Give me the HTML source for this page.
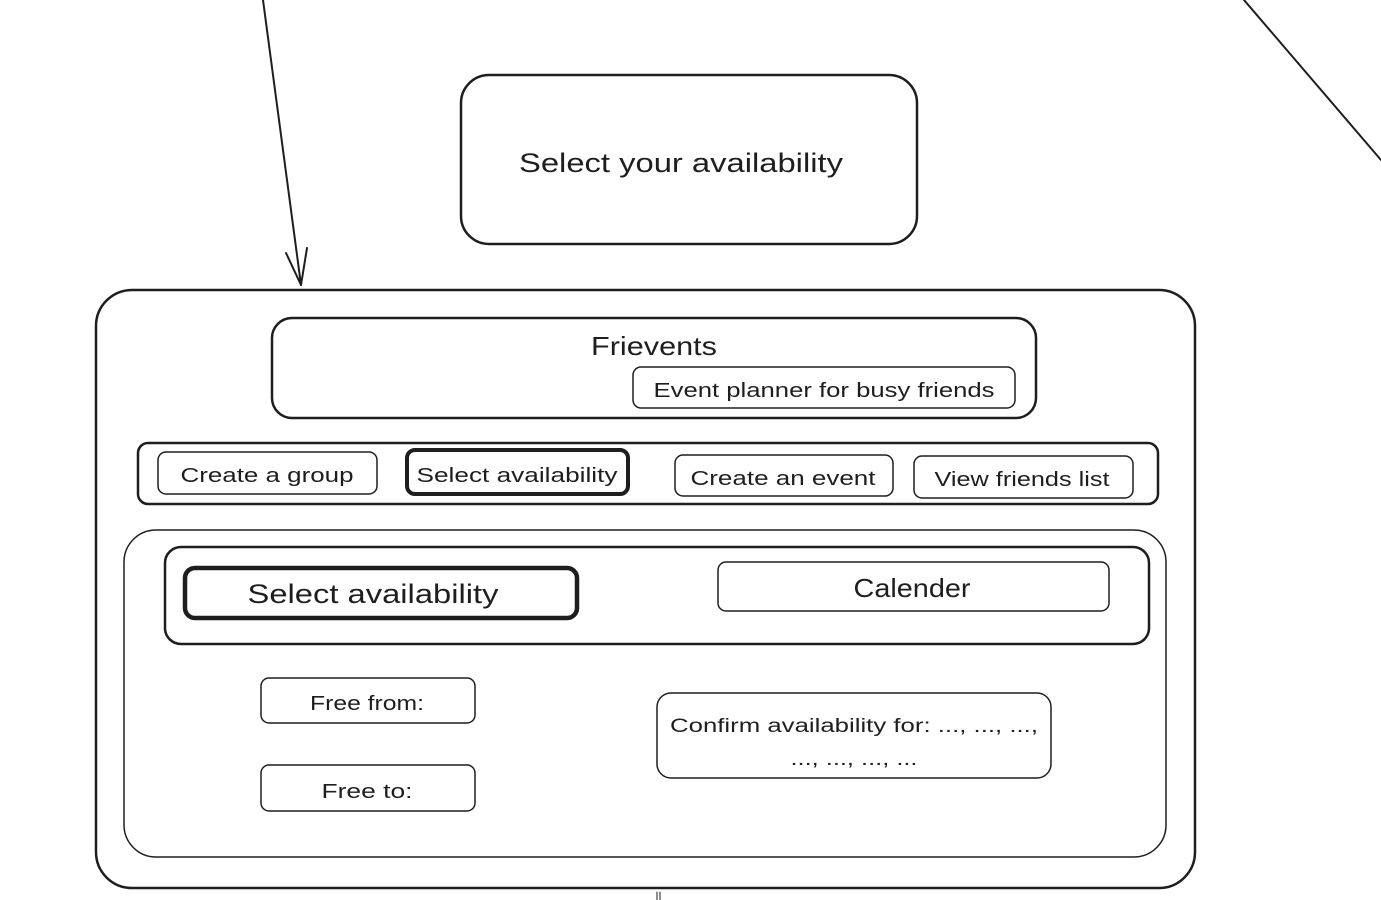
<!DOCTYPE html>
<html><head><meta charset="utf-8"><style>
html,body{margin:0;padding:0;background:#fff;width:1381px;height:900px;overflow:hidden}
svg{display:block}
text{font-family:"Liberation Sans",sans-serif;fill:#1e1e1e}
</style></head><body>
<svg width="1381" height="900" viewBox="0 0 1381 900" fill="none" stroke="#1e1e1e" stroke-width="2" stroke-linecap="round" stroke-linejoin="round">
<path d="M263 0 L301 285"/>
<path d="M301 285 L286 253 M301 285 L307 248"/>
<path d="M1244 0 L1381 160"/>
<rect x="461" y="75" width="456" height="169" rx="28" stroke-width="2.5"/>
<text x="681" y="172" font-size="27" text-anchor="middle" stroke="none" textLength="324" lengthAdjust="spacingAndGlyphs">Select your availability</text>
<rect x="96" y="290" width="1099" height="598" rx="36" stroke-width="2.5"/>
<rect x="272" y="318" width="764" height="100" rx="20" stroke-width="2.5"/>
<text x="654" y="355" font-size="26" text-anchor="middle" stroke="none" textLength="126" lengthAdjust="spacingAndGlyphs">Frievents</text>
<rect x="633" y="367" width="382" height="41" rx="8" stroke-width="1.5"/>
<text x="824" y="397" font-size="20" text-anchor="middle" stroke="none" textLength="341" lengthAdjust="spacingAndGlyphs">Event planner for busy friends</text>
<rect x="138" y="443" width="1020" height="61" rx="10" stroke-width="2.5"/>
<rect x="158" y="452" width="219" height="42" rx="8" stroke-width="1.5"/>
<text x="267" y="482" font-size="20" text-anchor="middle" stroke="none" textLength="173" lengthAdjust="spacingAndGlyphs">Create a group</text>
<rect x="407" y="450" width="221" height="44" rx="8" stroke-width="4"/>
<text x="517" y="482" font-size="20" text-anchor="middle" stroke="none" textLength="201" lengthAdjust="spacingAndGlyphs">Select availability</text>
<rect x="675" y="455" width="218" height="41" rx="8" stroke-width="1.5"/>
<text x="783" y="485" font-size="20" text-anchor="middle" stroke="none" textLength="185" lengthAdjust="spacingAndGlyphs">Create an event</text>
<rect x="914" y="456" width="219" height="42" rx="8" stroke-width="1.5"/>
<text x="1022" y="486" font-size="20" text-anchor="middle" stroke="none" textLength="175" lengthAdjust="spacingAndGlyphs">View friends list</text>
<rect x="124" y="530" width="1042" height="327" rx="32" stroke-width="1.5"/>
<rect x="165" y="547" width="984" height="97" rx="16" stroke-width="2.5"/>
<rect x="185" y="568" width="392" height="50" rx="10" stroke-width="4.5"/>
<text x="373" y="603" font-size="27" text-anchor="middle" stroke="none" textLength="251" lengthAdjust="spacingAndGlyphs">Select availability</text>
<rect x="718" y="562" width="391" height="49" rx="8" stroke-width="1.5"/>
<text x="912" y="597" font-size="26" text-anchor="middle" stroke="none" textLength="117" lengthAdjust="spacingAndGlyphs">Calender</text>
<rect x="261" y="678" width="214" height="45" rx="8" stroke-width="1.5"/>
<text x="367" y="710" font-size="20" text-anchor="middle" stroke="none" textLength="114" lengthAdjust="spacingAndGlyphs">Free from:</text>
<rect x="261" y="765" width="214" height="46" rx="8" stroke-width="1.5"/>
<text x="367" y="798" font-size="20" text-anchor="middle" stroke="none" textLength="91" lengthAdjust="spacingAndGlyphs">Free to:</text>
<rect x="657" y="693" width="394" height="85" rx="14" stroke-width="1.5"/>
<text x="854" y="732" font-size="19" text-anchor="middle" stroke="none" textLength="368" lengthAdjust="spacingAndGlyphs">Confirm availability for: ..., ..., ...,</text>
<text x="854" y="765" font-size="19" text-anchor="middle" stroke="none" textLength="127" lengthAdjust="spacingAndGlyphs">..., ..., ..., ...</text>
<path d="M657 892 L657 900 M660 892 L660 900" stroke-width="1"/>
</svg>
</body></html>
